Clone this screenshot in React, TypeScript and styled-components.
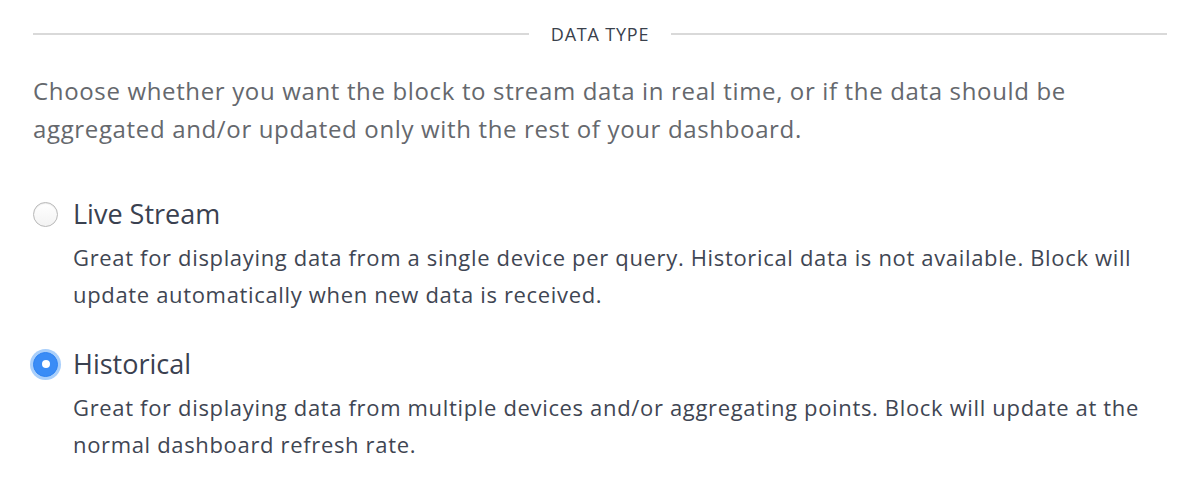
import React, { useState } from "react";
import styled, { createGlobalStyle } from "styled-components";

const GlobalStyle = createGlobalStyle`
  body {
    margin: 0;
    background: #ffffff;
    font-family: "Open Sans", "Noto Sans", sans-serif;
  }
`;

const Panel = styled.div`
  padding: 21px 33px 0;
`;

const SectionHeader = styled.div`
  display: flex;
  align-items: center;
  gap: 22px;
  height: 26px;

  &::before,
  &::after {
    content: "";
    flex: 1;
    height: 2px;
    background: #d9d9d9;
  }
`;

const SectionTitle = styled.span`
  font-size: 18px;
  font-weight: 500;
  letter-spacing: 0.8px;
  color: #3a414c;
`;

const Intro = styled.p`
  margin: 25px 0 0;
  font-size: 24px;
  line-height: 38px;
  letter-spacing: 0.65px;
  color: #65686d;
`;

const Options = styled.div`
  display: flex;
  flex-direction: column;
  gap: 33px;
  margin-top: 48px;
`;

const Option = styled.label`
  display: grid;
  grid-template-columns: 25px 1fr;
  column-gap: 15px;
  align-items: center;
  cursor: pointer;
`;

const Radio = styled.span<{ $checked: boolean }>`
  position: relative;
  width: 25px;
  height: 25px;
  border-radius: 50%;
  box-sizing: border-box;
  border: 1px solid ${(p) => (p.$checked ? "#2f83f1" : "#b8b8b8")};
  background: ${(p) =>
    p.$checked ? "#3a8cf6" : "linear-gradient(#ffffff, #f3f3f3)"};
  box-shadow: ${(p) =>
    p.$checked
      ? "0 0 0 3px #a9cffb"
      : "inset 0 1px 1px rgba(0, 0, 0, 0.08)"};

  &::after {
    content: "";
    display: ${(p) => (p.$checked ? "block" : "none")};
    position: absolute;
    left: 50%;
    top: 50%;
    width: 8px;
    height: 8px;
    margin: -4px 0 0 -4px;
    border-radius: 50%;
    background: #ffffff;
  }
`;

const OptionTitle = styled.span`
  font-size: 27px;
  line-height: 36px;
  color: #3a4150;
`;

const OptionText = styled.p`
  grid-column: 2;
  margin: 7px 0 0;
  font-size: 22px;
  line-height: 37px;
  letter-spacing: 0.66px;
  color: #3f4653;
`;

const options = [
  {
    id: "live",
    title: "Live Stream",
    text: "Great for displaying data from a single device per query. Historical data is not available. Block will update automatically when new data is received.",
  },
  {
    id: "historical",
    title: "Historical",
    text: "Great for displaying data from multiple devices and/or aggregating points. Block will update at the normal dashboard refresh rate.",
  },
];

export default function App() {
  const [selected, setSelected] = useState("historical");

  return (
    <Panel>
      <GlobalStyle />
      <SectionHeader>
        <SectionTitle>DATA TYPE</SectionTitle>
      </SectionHeader>
      <Intro>
        Choose whether you want the block to stream data in real time, or if the
        data should be aggregated and/or updated only with the rest of your
        dashboard.
      </Intro>
      <Options>
        {options.map((o) => (
          <Option key={o.id} onClick={() => setSelected(o.id)}>
            <Radio $checked={selected === o.id} />
            <OptionTitle>{o.title}</OptionTitle>
            <OptionText>{o.text}</OptionText>
          </Option>
        ))}
      </Options>
    </Panel>
  );
}
